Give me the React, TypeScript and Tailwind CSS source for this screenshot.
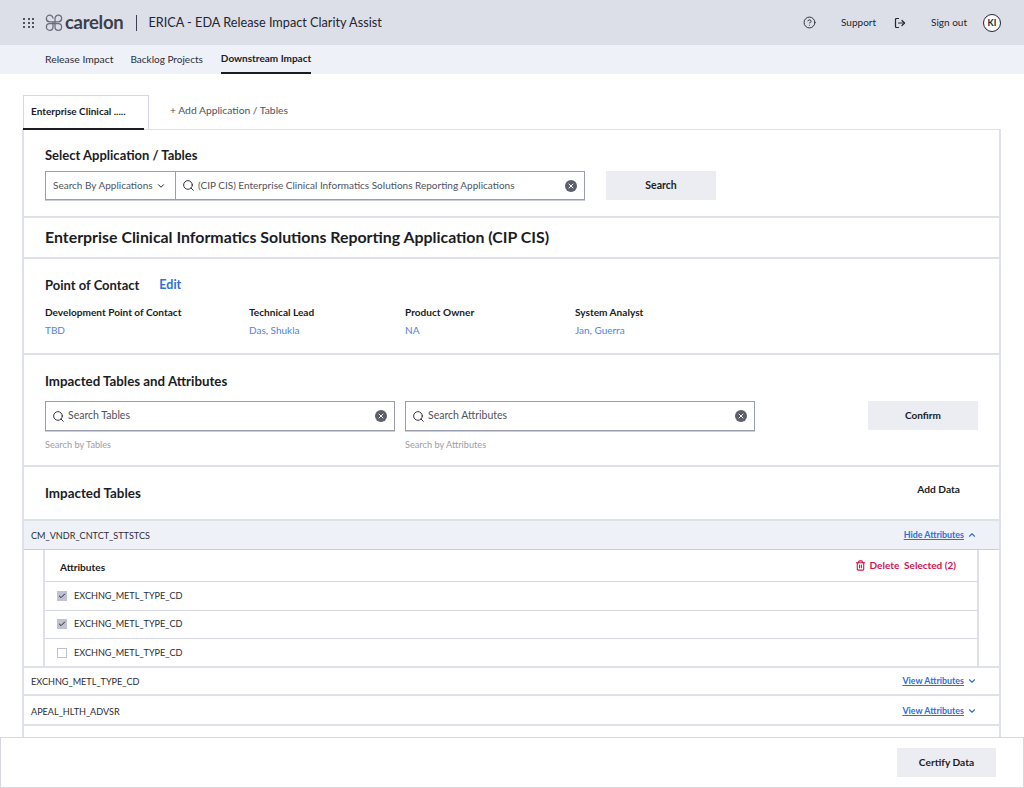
import React from "react";
import { Check, ChevronDown, ChevronUp, CircleHelp, LogOut, Search, Trash2, X } from "lucide-react";

const contacts = [
  { label: "Development Point of Contact", value: "TBD", width: "w-[204px]" },
  { label: "Technical Lead", value: "Das, Shukla", width: "w-[156px]" },
  { label: "Product Owner", value: "NA", width: "w-[170px]" },
  { label: "System Analyst", value: "Jan, Guerra", width: "w-[170px]" },
];

const ClearIcon = () => (
  <span className="flex h-[12px] w-[12px] items-center justify-center rounded-full bg-[#5b5e6b]">
    <X size={8} strokeWidth={3} className="text-white" />
  </span>
);

const SearchBox = ({ placeholder, hint }: { placeholder: string; hint: string }) => (
  <div className="w-[350px]">
    <div className="flex h-[30px] items-center border border-[#9a9db0] pl-[6px] pr-[7px] shadow-[0_1px_0_#c9ccd9]">
      <Search size={13} strokeWidth={1.8} className="text-[#2b2d38]" />
      <span className="ml-[3px] flex-1 text-[10.5px] text-[#50525e]">{placeholder}</span>
      <ClearIcon />
    </div>
    <div className="mt-[7px] text-[9.2px] text-[#9b9da8]">{hint}</div>
  </div>
);

const TableRow = ({ name, tall }: { name: string; tall?: boolean }) => (
  <div
    className={`flex items-center justify-between border-b-2 border-[#dfe1ea] pl-[7px] pr-[22px] ${
      tall ? "h-[30px] pt-[2px]" : "h-[28px]"
    }`}
  >
    <span className="pt-px text-[9.1px] text-[#2b2d38]">{name}</span>
    <span className="flex items-center gap-[3px] text-[8.9px] font-bold text-[#2e6fd8] underline">
      View Attributes
      <ChevronDown size={10} strokeWidth={2.6} />
    </span>
  </div>
);

const AttributeRow = ({ checked, last }: { checked: boolean; last?: boolean }) => (
  <div className={`flex items-center pl-[12px] ${last ? "h-[27px]" : "h-[28.5px] border-b border-[#d5d7e3]"}`}>
    {checked ? (
      <span className="flex h-[10px] w-[10px] items-center justify-center bg-[#bfc2d0]">
        <Check size={8} strokeWidth={3} className="text-[#23252f]" />
      </span>
    ) : (
      <span className="h-[10px] w-[10px] border border-[#bfc2d0]" />
    )}
    <span className="ml-[7px] text-[9.1px] text-[#2b2d38]">EXCHNG_METL_TYPE_CD</span>
  </div>
);

export default function App() {
  return (
    <div className="relative h-[788px] w-[1024px] overflow-hidden bg-white font-['Lato',sans-serif] text-[#1b1c24]">
      {/* Top bar */}
      <header className="flex h-[45px] items-center bg-[#dcdfe8] pl-[23px] pr-[23px]">
        <div className="grid w-[12px] grid-cols-3 gap-[2px]">
          {Array.from({ length: 9 }).map((_, i) => (
            <span key={i} className="h-[2px] w-[2px] rounded-full bg-[#23252f]" />
          ))}
        </div>
        <svg viewBox="0 0 18 17" className="ml-[10px] h-[17px] w-[18px] fill-none stroke-[#6a6d7c]" strokeWidth="1.3">
          <path d="M8 4.5A3.3 3.3 0 1 0 4.7 7.8H8V13a3.3 3.3 0 1 1-3.3-3.3H13.300A3.300 3.300 0 1 1 10 13V4.500A3.300 3.300 0 1 1 13.300 7.800H8" />
        </svg>
        <span className="ml-[2px] text-[18.5px] font-bold leading-none tracking-[-0.3px] text-[#3c3f4d]">carelon</span>
        <span className="ml-[13px] h-[16px] w-px bg-[#3c3f4d]" />
        <span className="ml-[11px] text-[12.7px] text-[#23252f]">ERICA - EDA Release Impact Clarity Assist</span>
        <div className="ml-auto flex items-center text-[10px] text-[#23252f]">
          <CircleHelp size={13} strokeWidth={1.7} />
          <span className="ml-[25px]">Support</span>
          <LogOut size={12} strokeWidth={2.4} className="ml-[18px]" />
          <span className="ml-[25px]">Sign out</span>
          <span className="ml-[16px] flex h-[18px] w-[18px] items-center justify-center rounded-full border border-[#23252f] bg-white text-[9px] font-bold">
            KI
          </span>
        </div>
      </header>

      {/* Sub navigation */}
      <nav className="flex h-[29px] items-stretch bg-[#eef1f8] pl-[45px] text-[10px] text-[#2b2d38]">
        <span className="flex items-center text-[10.4px]">Release Impact</span>
        <span className="ml-[17px] flex items-center">Backlog Projects</span>
        <span className="ml-[18px] flex items-center border-b-2 border-[#1b1c24] font-bold text-[#1b1c24]">
          Downstream Impact
        </span>
      </nav>

      {/* Tabs */}
      <div className="ml-[23px] mt-[21px] flex h-[34px] w-[267px] items-stretch">
        <div className="relative flex w-[126px] items-center border border-b-0 border-[#d5d7e3] pb-[2px] pl-[7px] text-[10px] font-bold">
          Enterprise Clinical .....
          <span className="absolute -bottom-px -left-px h-[2px] w-[121px] bg-[#1b1c24]" />
        </div>
        <div className="flex items-center pb-[2px] pl-[21px] text-[10.3px] text-[#50525e]">+ Add Application / Tables</div>
      </div>

      {/* Main panel */}
      <main className="ml-[22px] h-[659px] w-[979px] border-x-2 border-t border-[#dfe1ea]">
        <section className="h-[88px] border-b-2 border-[#dfe1ea] pl-[21px] pt-[17px]">
          <h2 className="text-[13px] font-bold leading-[16px]">Select Application / Tables</h2>
          <div className="mt-[8px] flex items-start">
            <div className="flex h-[29px] w-[540px] items-center border border-[#9a9db0] text-[10px] text-[#50525e] shadow-[0_1px_0_#c9ccd9]">
              <div className="flex h-full w-[130px] items-center border-r border-[#9a9db0] pl-[7px]">
                Search By Applications
                <ChevronDown size={10} strokeWidth={2.4} className="ml-[3px] text-[#23252f]" />
              </div>
              <Search size={13} strokeWidth={1.8} className="ml-[6px] text-[#2b2d38]" />
              <span className="ml-[3px] flex-1">(CIP CIS) Enterprise Clinical Informatics Solutions Reporting Applications</span>
              <span className="mr-[7px]">
                <ClearIcon />
              </span>
            </div>
            <button className="ml-[21px] h-[29px] w-[110px] bg-[#ebedf3] text-[10.5px] font-bold">Search</button>
          </div>
        </section>

        <section className="flex h-[41px] items-center border-b-2 border-[#dfe1ea] pb-[2px] pl-[21px]">
          <h1 className="text-[15.9px] font-bold">Enterprise Clinical Informatics Solutions Reporting Application (CIP CIS)</h1>
        </section>

        <section className="h-[96px] border-b-2 border-[#dfe1ea] pl-[21px] pt-[17px]">
          <div className="flex items-center">
            <h2 className="text-[13px] font-bold leading-[16px]">Point of Contact</h2>
            <span className="ml-[20px] text-[12.5px] font-bold text-[#2e6fd8]">Edit</span>
          </div>
          <div className="mt-[10px] flex">
            {contacts.map((c) => (
              <div key={c.label} className={c.width}>
                <div className="text-[10.1px] font-bold">{c.label}</div>
                <div className="mt-[3px] text-[10px] text-[#4f83e0]">{c.value}</div>
              </div>
            ))}
          </div>
        </section>

        <section className="h-[112px] border-b-2 border-[#dfe1ea] pl-[21px] pt-[18px]">
          <h2 className="text-[13.3px] font-bold leading-[16px]">Impacted Tables and Attributes</h2>
          <div className="mt-[12px] flex items-start">
            <SearchBox placeholder="Search Tables" hint="Search by Tables" />
            <div className="ml-[10px]">
              <SearchBox placeholder="Search Attributes" hint="Search by Attributes" />
            </div>
            <button className="ml-[113px] h-[29px] w-[110px] bg-[#ebedf3] text-[10px] font-bold">Confirm</button>
          </div>
        </section>

        <section className="flex h-[54px] items-start justify-between border-b-2 border-[#dfe1ea] pl-[21px] pr-[39px]">
          <h2 className="mt-[18px] text-[13.4px] font-bold leading-[16px]">Impacted Tables</h2>
          <span className="mt-[15px] text-[10.2px] font-bold">Add Data</span>
        </section>

        <div className="flex h-[29px] items-center justify-between border-b border-[#c9ccd9] bg-[#eef1f8] pl-[7px] pr-[22px]">
          <span className="pt-px text-[9.1px] text-[#2b2d38]">CM_VNDR_CNTCT_STTSTCS</span>
          <span className="flex items-center gap-[3px] text-[8.9px] font-bold text-[#2e6fd8] underline">
            Hide Attributes
            <ChevronUp size={10} strokeWidth={2.6} />
          </span>
        </div>
        <div className="ml-[19px] mr-[20px] h-[116px] border-x-2 border-[#dfe1ea]">
          <div className="flex h-[32px] items-center justify-between border-b border-[#d5d7e3] pl-[15px] pr-[21px]">
            <span className="pt-[5px] text-[10.1px] font-bold">Attributes</span>
            <span className="flex items-center text-[10px] font-bold text-[#d6134e]">
              <Trash2 size={11} strokeWidth={2.4} className="mr-[4px]" />
              Delete&nbsp; Selected (2)
            </span>
          </div>
          <AttributeRow checked />
          <AttributeRow checked />
          <AttributeRow checked={false} last />
        </div>
        <div className="border-t-2 border-[#dfe1ea]">
          <TableRow name="EXCHNG_METL_TYPE_CD" />
          <TableRow name="APEAL_HLTH_ADVSR" tall />
        </div>
      </main>

      {/* Sticky footer */}
      <footer className="absolute bottom-0 left-0 flex h-[51px] w-full items-center justify-end border border-[#d5d7e3] bg-white pr-[27px]">
        <button className="h-[29px] w-[99px] bg-[#ebedf3] text-[10.2px] font-bold">Certify Data</button>
      </footer>
    </div>
  );
}
